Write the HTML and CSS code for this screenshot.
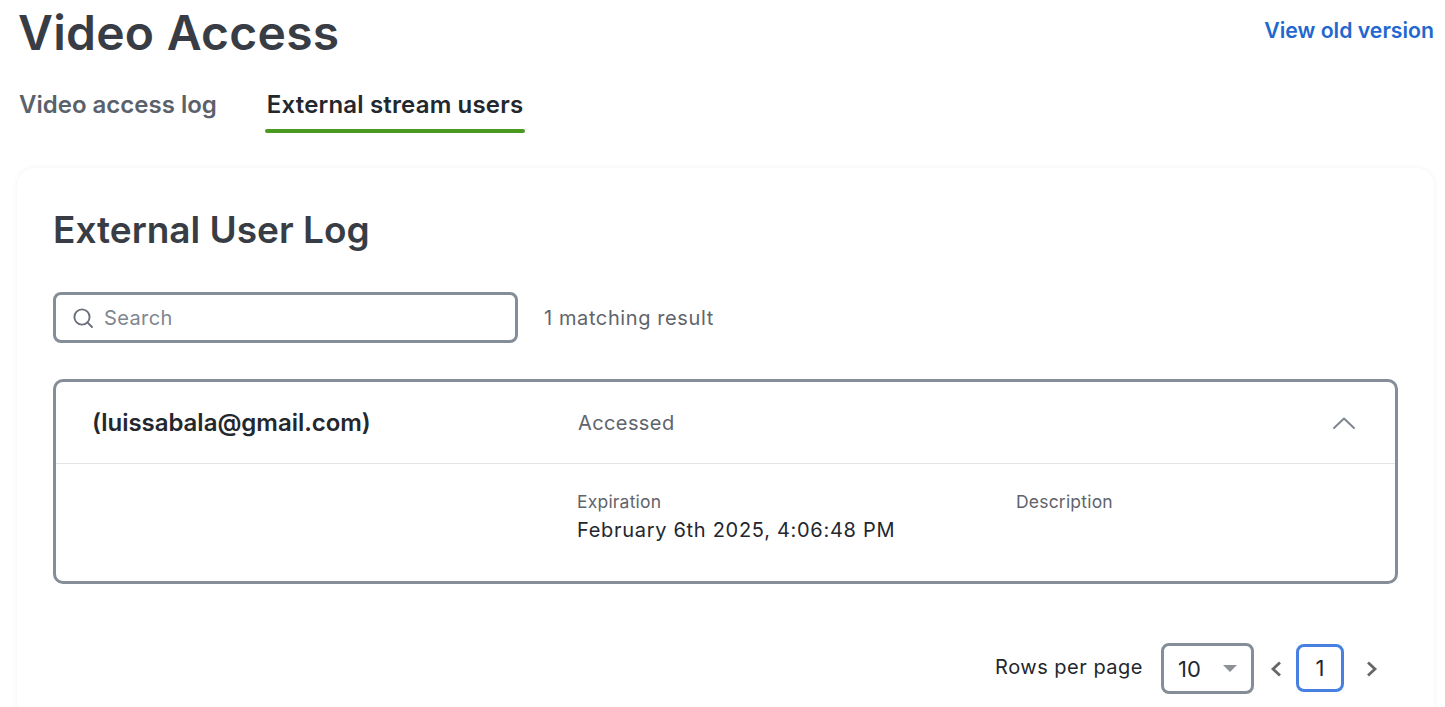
FILE: index.html
```html
<!DOCTYPE html>
<html lang="en">
<head>
<meta charset="utf-8">
<title>Video Access</title>
<link rel="stylesheet" href="styles.css">
</head>
<body>
<main class="page">
  <header class="page-head">
    <h1 class="title">Video Access</h1>
    <a class="old-link" href="#">View old version</a>
  </header>
  <nav class="tabs">
    <a class="tab" href="#">Video access log</a>
    <a class="tab tab-active" href="#">External stream users</a>
  </nav>
  <section class="card">
    <h2 class="card-title">External User Log</h2>
    <div class="filter-row">
      <label class="search">
        <svg class="search-icon" width="22" height="22" viewBox="0 0 22 22" fill="none" stroke="#6a7079" stroke-width="1.9" stroke-linecap="round"><circle cx="10" cy="10" r="7.6"/><path d="M15.4 15.4 20 20"/></svg>
        <span class="search-text">Search</span>
      </label>
      <span class="match-count">1 matching result</span>
    </div>
    <article class="log">
      <div class="log-head">
        <div class="log-user">(luissabala@gmail.com)</div>
        <div class="log-status">Accessed</div>
        <svg class="log-chevron" width="24" height="14" viewBox="0 0 24 14" fill="none" stroke="#7f868f" stroke-width="2" stroke-linecap="round" stroke-linejoin="round"><path d="M2 12 12 2.5 22 12"/></svg>
      </div>
      <div class="log-body">
        <div class="field field-exp">
          <div class="field-label">Expiration</div>
          <div class="field-value">February 6th 2025, 4:06:48 PM</div>
        </div>
        <div class="field">
          <div class="field-label">Description</div>
        </div>
      </div>
    </article>
    <footer class="pager">
      <span class="rows-label">Rows per page</span>
      <div class="rows-select">
        <span>10</span>
        <span class="caret"></span>
      </div>
      <svg class="pg-arrow" width="12" height="16" viewBox="0 0 12 16" fill="none" stroke="#666" stroke-width="2.8"><path d="M10 1.500 3 8l7 6.500"/></svg>
      <div class="page-num">1</div>
      <svg class="pg-arrow" width="12" height="16" viewBox="0 0 12 16" fill="none" stroke="#666" stroke-width="2.8"><path d="M2 1.500 9 8l-7 6.500"/></svg>
    </footer>
  </section>
</main>
</body>
</html>
```
FILE: styles.css
```css
* { box-sizing: border-box; }
html, body { margin: 0; height: 707px; overflow: hidden; }
body { background: #fff; font-family: Inter, "Liberation Sans", sans-serif; color: #23272e; }
.page { padding: 0 11px 0 17px; }
.page-head { display: flex; justify-content: space-between; align-items: flex-start; padding-left: 1px; height: 74px; }
.title { margin: 5px 0 0; font-size: 48px; line-height: 56px; font-weight: 600; color: #383d45; letter-spacing: 0.25px; }
.old-link { margin-top: 16px; font-size: 21.250px; line-height: 28px; font-weight: 600; color: #1f68cf; text-decoration: none; }
.tabs { display: flex; gap: 50px; height: 59px; padding-left: 2px; }
.tab { height: 59px; padding-top: 16px; font-size: 24px; line-height: 30px; font-weight: 600; color: #5b616b; text-decoration: none; }
.tab-active { color: #23272e; position: relative; letter-spacing: 0.17px; }
.tab-active::after { content: ""; position: absolute; left: -2px; right: -2px; top: 55px; height: 4px; border-radius: 2px; background: #4a9a22; }
.card { margin-top: 35px; height: 560px; padding: 36px 36px 0; background: #fff; border-radius: 18px; box-shadow: 0 0 6px rgba(0,0,0,.05); }
.card-title { margin: 0; font-size: 37px; line-height: 52px; font-weight: 600; color: #383d45; }
.filter-row { display: flex; align-items: center; gap: 26px; margin-top: 36px; }
.search { display: flex; align-items: center; gap: 10px; width: 465px; height: 51px; padding-left: 16px; border: 3px solid #858d98; border-radius: 8px; }
.search-text { font-size: 20px; color: #80868f; letter-spacing: 0.4px; }
.match-count { font-size: 20px; color: #5f646c; letter-spacing: 0.6px; }
.log { margin-top: 36px; height: 205px; border: 3px solid #858d98; border-radius: 10px; }
.log-head { display: flex; align-items: center; height: 82px; border-bottom: 1px solid #e2e3e5; padding-left: 36px; }
.log-user { width: 486px; font-size: 24px; font-weight: 600; color: #23272e; letter-spacing: -0.03px; }
.log-status { flex: 1; font-size: 20px; color: #5f646c; letter-spacing: 0.4px; }
.log-chevron { margin-right: 39px; }
.log-body { display: flex; padding: 27px 0 0 521px; }
.field-exp { width: 439px; }
.field-label { font-size: 17.500px; line-height: 22px; color: #5f646c; letter-spacing: 0.2px; }
.field-value { margin-top: 3px; font-size: 20px; line-height: 28px; color: #23272e; letter-spacing: 0.7px; }
.pager { display: flex; align-items: center; justify-content: flex-end; margin-top: 59px; padding-right: 20px; }
.rows-label { font-size: 20px; color: #23272e; margin: 0 18px 3px 0; letter-spacing: 0.5px; }
.rows-select { display: flex; align-items: center; justify-content: space-between; width: 93px; height: 51px; padding: 0 14px; border: 3px solid #858d98; border-radius: 8px; font-size: 22px; margin-right: 16px; }
.caret { width: 0; height: 0; border: 7px solid transparent; border-top: 7px solid #8d9197; border-bottom: 0; }
.page-num { display: flex; align-items: center; justify-content: center; width: 48px; height: 48px; margin: 0 22px 2px 14px; border: 3px solid #4780e0; border-radius: 8px; font-size: 22px; }
```
